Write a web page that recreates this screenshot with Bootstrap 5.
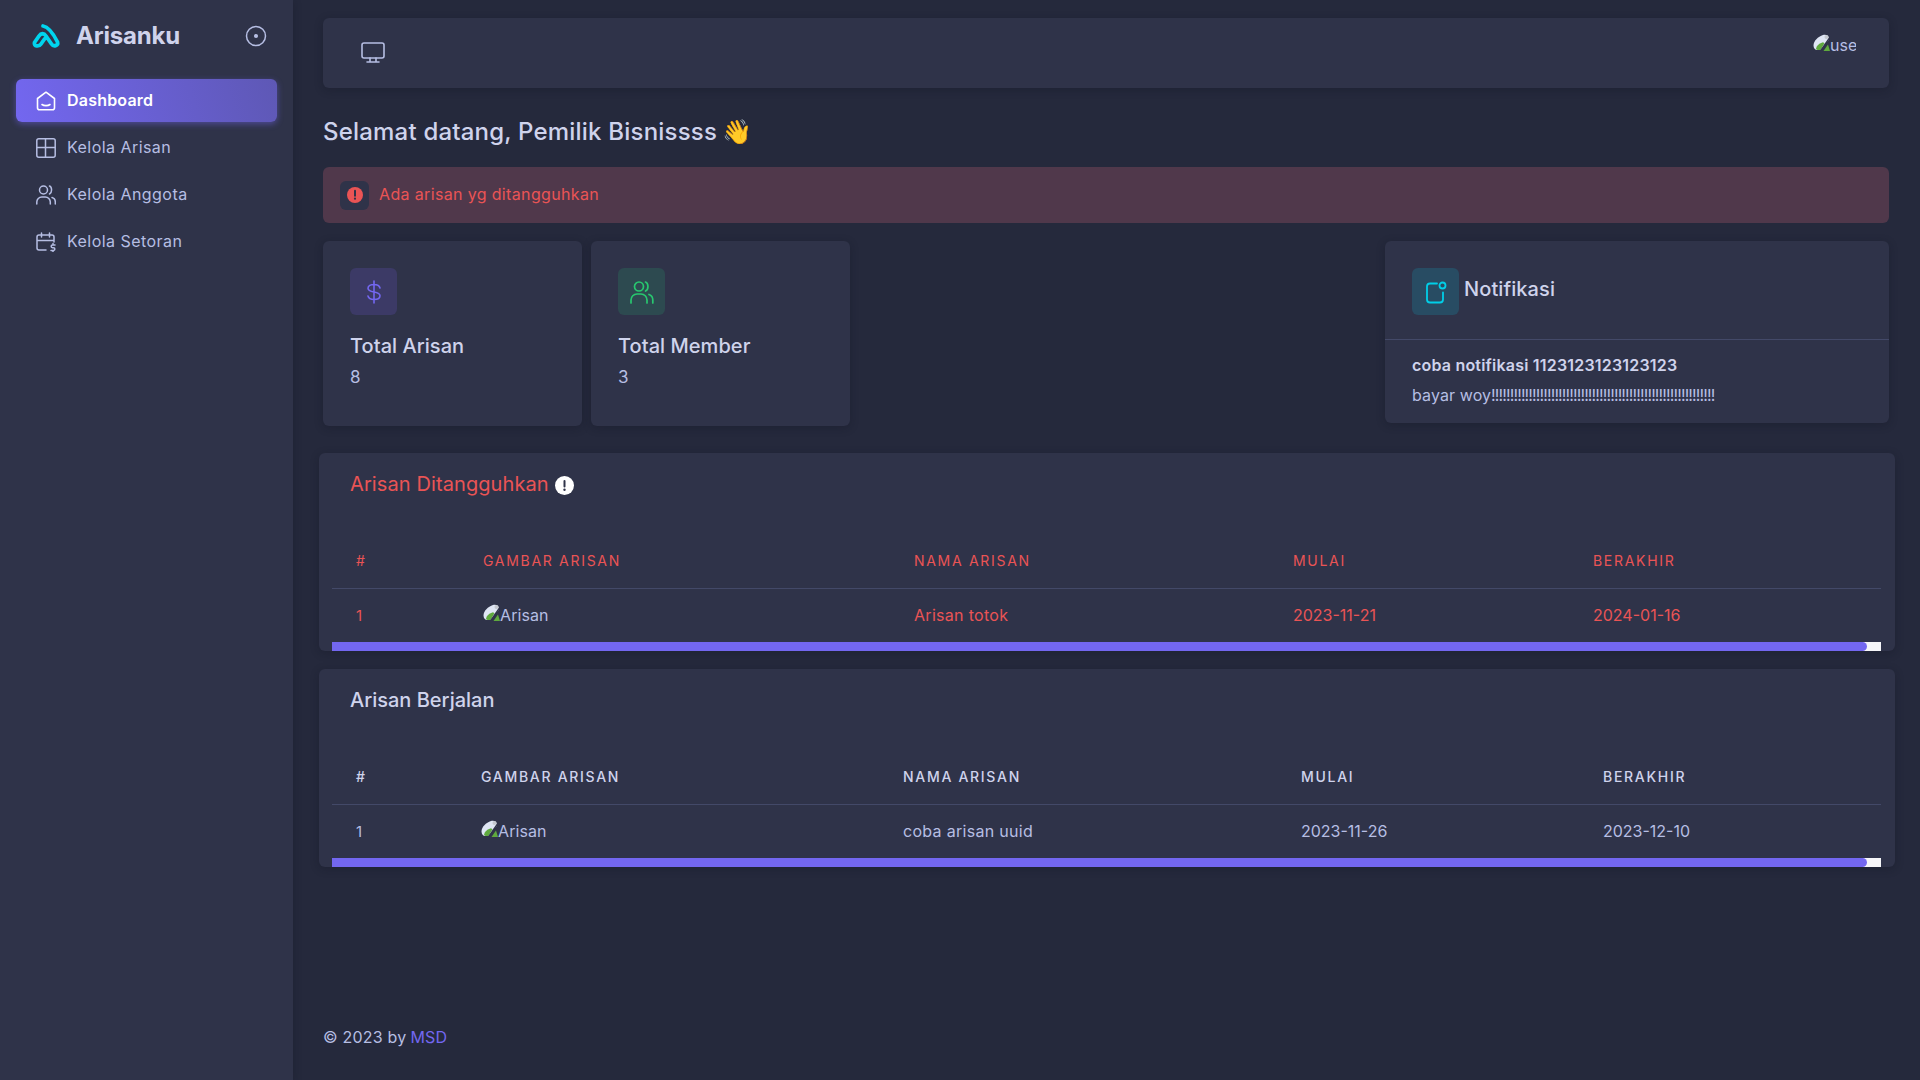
<!DOCTYPE html>
<html lang="id">
<head>
<meta charset="utf-8">
<title>Arisanku</title>
<link href="https://cdn.jsdelivr.net/npm/bootstrap@5.3.0/dist/css/bootstrap.min.css" rel="stylesheet">
<style>
html,body{height:100%}
body{background:#25293c;color:#b6bee3;font-family:Inter,"Noto Sans",sans-serif;font-size:15px;line-height:1.47;overflow:hidden}
.shell{display:flex;height:1080px}
.side{width:293px;flex:none;background:#2f3349;box-shadow:0 2px 8px rgba(15,20,34,.3);padding:0 16px}
.brandrow{height:72px;display:flex;align-items:center;padding:0 10px 0 15px}
.brandname{font-size:24px;font-weight:700;color:#cfd3ec;margin-left:15px;letter-spacing:-.2px}
.brandgap{margin-left:auto}
.menu-link{display:flex;align-items:center;height:43px;padding:0 20px;border-radius:6px;color:#b6bee3;text-decoration:none;margin-bottom:4px;font-size:16px;letter-spacing:.45px}
.menu-link svg{margin-right:11px;flex:none}
.menu-link.is-on{background:linear-gradient(72deg,#7367f0,#5e58b5);color:#fff;font-weight:600;letter-spacing:.2px;box-shadow:0 2px 6px rgba(115,103,240,.48);margin-top:7px;margin-bottom:4px}
.main{flex:1;display:flex;flex-direction:column;padding:18px 31px 0 30px;min-width:0}
.topbar{height:70px;background:#2f3349;border-radius:6px;box-shadow:0 2px 8px rgba(15,20,34,.3);display:flex;align-items:center;padding:0 33px 0 38px;justify-content:space-between}
.topbar>svg{margin-top:-2px}
.broken{display:inline-flex;align-items:flex-end;overflow:hidden;white-space:nowrap;height:17px;line-height:12px}
.broken svg{flex:none}
.user-broken{width:43px;font-size:16px;margin-top:-22px}
.tbl-broken{width:67px}
.hello{font-size:24px;font-weight:500;color:#cfd3ec;margin:26px 0 17px;line-height:36px;letter-spacing:.2px;display:flex;align-items:center}
.wave{margin-left:-2px}
.warnbar{height:56px;background:#50384b;border-radius:6px;display:flex;align-items:center;padding:0 17px;color:#ea5455;font-size:16px;letter-spacing:.35px;margin-bottom:18px}
.warnicon{width:29px;height:29px;border-radius:6px;background:#2f3349;display:flex;align-items:center;justify-content:center;margin-right:10px}
.stats{display:flex;gap:9px;align-items:flex-start;height:186px;margin-bottom:26px}
.panel{background:#2f3349;border-radius:6px;box-shadow:0 2px 8px rgba(15,20,34,.3)}
.stat{width:259px;height:185px;padding:27px}
.notif{width:504px;height:182px;margin-left:auto}
.chip{width:47px;height:47px;border-radius:6px;display:flex;align-items:center;justify-content:center;flex:none}
.chip-p{background:#3c3a66}.chip-g{background:#2d4a50}.chip-c{background:#284c63}
.stat-title{font-size:20px;font-weight:500;color:#cfd3ec;margin-top:17px;line-height:28px;letter-spacing:.05px}
.stat-num{font-size:17px;margin-top:4px;line-height:26px}
.notif-h{height:99px;padding:27px 27px 0;display:flex;border-bottom:1px solid #434968}
.notif-t{font-size:20px;font-weight:500;color:#cfd3ec;margin-left:5px;line-height:42px;letter-spacing:.1px}
.notif-b{padding:12px 27px 0}
.notif-b1{font-weight:600;color:#cfd3ec;font-size:16px;line-height:26px;letter-spacing:.2px}
.notif-b2{font-size:16px;line-height:26px;margin-top:4px;letter-spacing:.1px}
.bangs{letter-spacing:-.88px}
.tcard{height:198px;margin:0 -6px 18px -4px;padding:0 14px 0 13px;overflow:hidden}
.tcard-h{font-size:20px;font-weight:500;height:82px;padding:16px 18px 0;line-height:30px;color:#cfd3ec;letter-spacing:0;display:flex;align-items:flex-start}
.tcard-h.danger{color:#ea5455;font-weight:400;letter-spacing:.1px}
.tcard-h svg{margin:7px 0 0 6px}
.tbl{--bs-table-bg:transparent;--bs-table-color:inherit;color:inherit;table-layout:fixed;margin:0;width:100%}
.tbl th{font-size:14px;font-weight:500;letter-spacing:1.7px;text-transform:uppercase;height:53px;padding:8px 24px;vertical-align:middle;border-bottom:1px solid #434968;color:#cfd3ec;white-space:nowrap}
.tbl td{height:54px;padding:10px 24px 8px;vertical-align:middle;border:0;font-size:16px;white-space:nowrap;letter-spacing:.3px;color:#b6bee3}
.tbl .numcell{font-size:15px}
.tbl .datecell{letter-spacing:0}
.is-red th,.is-red td{color:#ea5455}
.is-red th{font-weight:400}
.a1{width:127px}.a2{width:431px}.a3{width:379px}.a4{width:300px}
.b1{width:125px}.b2{width:422px}.b3{width:398px}.b4{width:302px}
.bar-track{height:9px;background:#f6f6f9}
.bar-thumb{height:9px;width:1535px;background:#7367f0;border-radius:0 5px 5px 0}
.tbl td .broken{color:#b6bee3;letter-spacing:.1px}
.foot{margin-top:auto;height:54px;display:flex;align-items:flex-start;font-size:16px;letter-spacing:.2px;color:#b6bee3}
.foot a{color:#7367f0;text-decoration:none;margin-left:4px}
</style>
</head>
<body>
<svg width="0" height="0" class="d-none">
<symbol id="brk" viewBox="0 0 17 17"><path d="M.5 11.500C.5 7 5 2.500 10 1c3-.8 6 .5 6 3.500 0 2-1.500 3-3 4l-5 7.500H4.500C2 16 .5 14 .5 11.500z" fill="#dfe6f4"/><path d="M3 15c.5-3.500 3.500-6 7-6.800l1.500 1L7.500 16H4.500z" fill="#5fa93e"/><path d="M10.500 17l4.500-6.500 2 6.500z" fill="#5fa93e"/><path d="M7.500 17L16.500 4" stroke="#2f3349" stroke-width="1.400"/><circle cx="13.500" cy="3" r="2" fill="#c4c8cf"/></symbol>
</svg>
<div class="shell">
<aside class="side">
  <div class="brandrow">
    <svg width="30" height="26" viewBox="0 0 30 26" fill="none" stroke="#00d5ee" stroke-width="3.800" stroke-linecap="round" stroke-linejoin="round"><path d="M12 3C18 4 24 14 26.500 19C27.500 23 22.500 24 20.500 21L15 13C13 10 10 10 8 13L3.500 19.500C2.500 23.500 8 24 10 21L13.500 16"/></svg>
    <span class="brandname">Arisanku</span>
    <svg class="brandgap" width="22" height="22" viewBox="0 0 22 22" fill="none" stroke="#b6bee3" stroke-width="1.500"><circle cx="11" cy="11" r="9.500"/><circle cx="11" cy="11" r="1.300" fill="#b6bee3"/></svg>
  </div>
  <nav>
    <a class="menu-link is-on" href="#"><svg width="20" height="20" viewBox="0 0 20 20" fill="none" stroke="#fff" stroke-width="1.600" stroke-linejoin="round" stroke-linecap="round"><path d="M1.500 7.500L10 1.200l8.500 6.300v9.300a2 2 0 0 1-2 2h-13a2 2 0 0 1-2-2z"/><path d="M6 13.500c2 1.500 6 1.500 8 0"/></svg>Dashboard</a>
    <a class="menu-link" href="#"><svg width="20" height="20" viewBox="0 0 20 20" fill="none" stroke="#b6bee3" stroke-width="1.500"><rect x=".8" y=".8" width="18.400" height="18.400" rx="2"/><path d="M.8 9.500h18.400M9.500 .8v18.400"/></svg>Kelola Arisan</a>
    <a class="menu-link" href="#"><svg width="20" height="20" viewBox="0 0 20 20" fill="none" stroke="#b6bee3" stroke-width="1.500" stroke-linecap="round"><circle cx="7.500" cy="5" r="4"/><path d="M.8 19v-2a5 5 0 0 1 5-5h3.500a5 5 0 0 1 5 5v2M13.500 1c2.500.7 3 6.500 0 8M16 12.500c2 .6 3.300 2.300 3.300 4.500v2"/></svg>Kelola Anggota</a>
    <a class="menu-link" href="#"><svg width="20" height="20" viewBox="0 0 20 20" fill="none" stroke="#b6bee3" stroke-width="1.500" stroke-linecap="round" stroke-linejoin="round"><path d="M10 18H3a2 2 0 0 1-2-2V5a2 2 0 0 1 2-2h13a2 2 0 0 1 2 2v5M13.500 1v4M5.500 1v4M1 8.500h17"/><path d="M19 13h-2.500a1.300 1.300 0 0 0 0 2.700h1a1.300 1.300 0 0 1 0 2.700H15M17 11.500v1.500M17 18.500V20"/></svg>Kelola Setoran</a>
  </nav>
</aside>
<main class="main">
  <div class="topbar">
    <svg width="24" height="21" viewBox="0 0 24 21" fill="none" stroke="#b6bee3" stroke-width="1.600" stroke-linecap="round" stroke-linejoin="round"><rect x="1" y="1" width="22" height="15" rx="2"/><path d="M6 20h12M9 16v4M15 16v4"/></svg>
    <span class="broken user-broken"><svg width="17" height="17"><use href="#brk"/></svg>user</span>
  </div>
  <div class="hello">Selamat datang, Pemilik Bisnissss&nbsp;<span class="wave">👋</span></div>
  <div class="warnbar"><span class="warnicon"><svg width="16" height="16" viewBox="0 0 16 16"><circle cx="8" cy="8" r="8" fill="#ea5455"/><path d="M8 3.800v5" stroke="#2f3349" stroke-width="2" stroke-linecap="round"/><circle cx="8" cy="11.700" r="1.100" fill="#2f3349"/></svg></span>Ada arisan yg ditangguhkan</div>
  <div class="stats">
    <div class="panel stat">
      <div class="chip chip-p"><svg width="24" height="24" viewBox="0 0 24 24" fill="none" stroke="#7367f0" stroke-width="1.600" stroke-linecap="round"><path d="M18 8c-.5-2-3-3.500-6-3.500-3.300 0-6 1.500-6 3.800S8.700 11.500 12 12s6 1.500 6 3.800-2.700 3.700-6 3.700c-3 0-5.500-1.500-6-3.500M12 1v22"/></svg></div>
      <div class="stat-title">Total Arisan</div>
      <div class="stat-num">8</div>
    </div>
    <div class="panel stat">
      <div class="chip chip-g"><svg width="24" height="24" viewBox="0 0 24 24" fill="none" stroke="#28c76f" stroke-width="1.700" stroke-linecap="round"><circle cx="9" cy="6.500" r="4.500"/><path d="M1 23v-3a6 6 0 0 1 6-6h4a6 6 0 0 1 6 6v3M15.500 2c3 1 3.500 7.500 0 9M19 14.500c2.200.8 3.800 2.700 3.800 5.500v3"/></svg></div>
      <div class="stat-title">Total Member</div>
      <div class="stat-num">3</div>
    </div>
    <div class="panel notif">
      <div class="notif-h">
        <div class="chip chip-c"><svg width="24" height="24" viewBox="0 0 24 24" fill="none" stroke="#00cfe8" stroke-width="1.800" stroke-linecap="round"><circle cx="18.500" cy="5.500" r="3"/><path d="M13 3.500H6a3 3 0 0 0-3 3v13a3 3 0 0 0 3 3h10a3 3 0 0 0 3-3v-7"/></svg></div>
        <span class="notif-t">Notifikasi</span>
      </div>
      <div class="notif-b">
        <div class="notif-b1">coba notifikasi 1123123123123123</div>
        <div class="notif-b2">bayar woy<span class="bangs">!!!!!!!!!!!!!!!!!!!!!!!!!!!!!!!!!!!!!!!!!!!!!!!!!!!!!!!!!!!!</span></div>
      </div>
    </div>
  </div>
  <section class="panel tcard is-red">
    <div class="tcard-h danger">Arisan Ditangguhkan <svg width="19" height="19" viewBox="0 0 19 19"><circle cx="9.500" cy="9.500" r="9.500" fill="#fff"/><path d="M9.500 5v5.500" stroke="#2f3349" stroke-width="2" stroke-linecap="round"/><circle cx="9.500" cy="13.800" r="1.200" fill="#2f3349"/></svg></div>
    <table class="table tbl">
      <colgroup><col class="a1"><col class="a2"><col class="a3"><col class="a4"><col></colgroup>
      <thead><tr><th>#</th><th>Gambar Arisan</th><th>Nama Arisan</th><th>Mulai</th><th>Berakhir</th></tr></thead>
      <tbody><tr><td class="numcell">1</td><td><span class="broken tbl-broken"><svg width="17" height="17"><use href="#brk"/></svg>Arisan</span></td><td>Arisan totok</td><td class="datecell">2023-11-21</td><td class="datecell">2024-01-16</td></tr></tbody>
    </table>
    <div class="bar-track"><div class="bar-thumb"></div></div>
  </section>
  <section class="panel tcard">
    <div class="tcard-h">Arisan Berjalan</div>
    <table class="table tbl">
      <colgroup><col class="b1"><col class="b2"><col class="b3"><col class="b4"><col></colgroup>
      <thead><tr><th>#</th><th>Gambar Arisan</th><th>Nama Arisan</th><th>Mulai</th><th>Berakhir</th></tr></thead>
      <tbody><tr><td class="numcell">1</td><td><span class="broken tbl-broken"><svg width="17" height="17"><use href="#brk"/></svg>Arisan</span></td><td>coba arisan uuid</td><td class="datecell">2023-11-26</td><td class="datecell">2023-12-10</td></tr></tbody>
    </table>
    <div class="bar-track"><div class="bar-thumb"></div></div>
  </section>
  <footer class="foot">© 2023 by <a href="#">MSD</a></footer>
</main>
</div>
<script src="https://cdn.jsdelivr.net/npm/bootstrap@5.3.0/dist/js/bootstrap.bundle.min.js"></script>
</body>
</html>
